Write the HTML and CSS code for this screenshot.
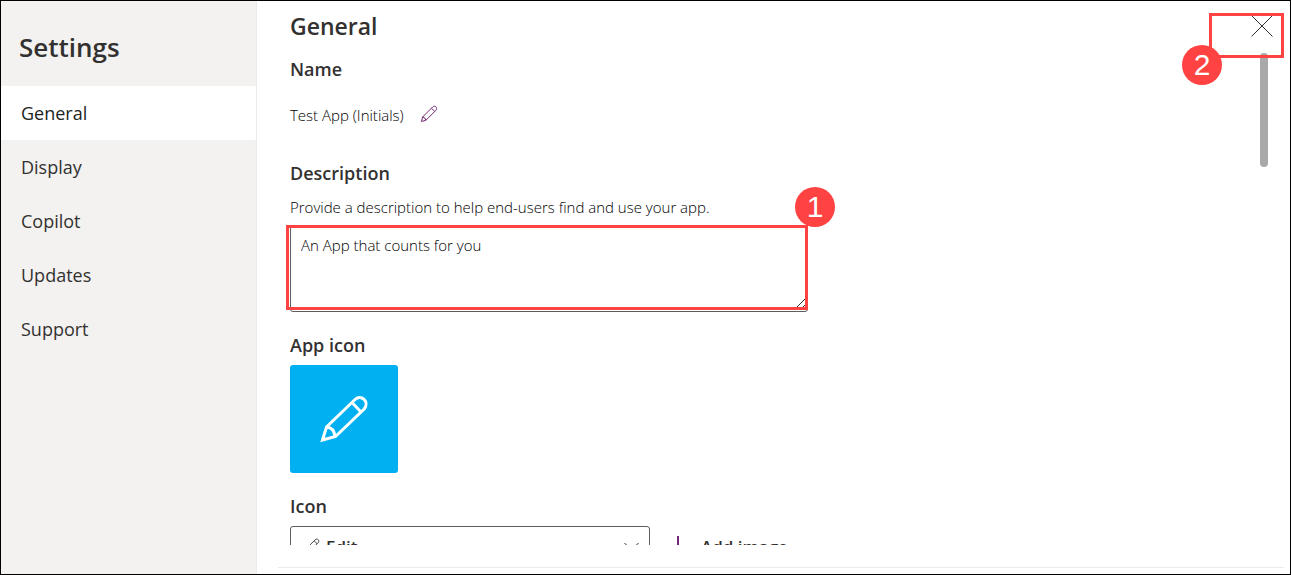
FILE: index.html
```
<!DOCTYPE html>
<html lang="en">
<head>
<meta charset="utf-8">
<title>Settings</title>
<link rel="stylesheet" href="styles.css">
</head>
<body>
<div class="dialog">
  <aside class="sidebar">
    <h1 class="sidebar-title">Settings</h1>
    <nav class="nav">
      <a class="nav-item nav-item-active" href="#general">General</a>
      <a class="nav-item" href="#display">Display</a>
      <a class="nav-item" href="#copilot">Copilot</a>
      <a class="nav-item" href="#updates">Updates</a>
      <a class="nav-item" href="#support">Support</a>
    </nav>
  </aside>
  <main class="main">
    <div class="content">
      <h2 class="page-title">General</h2>
      <h3 class="section-title">Name</h3>
      <div class="name-row">
        <span>Test App (Initials)</span>
        <button class="icon-button" type="button" aria-label="Edit name">
          <svg class="edit-icon" viewBox="0 0 18 18"><path d="M1.5 16.5 2.6 12 12.6 2C15 -.2 18 2.8 15.9 5.3L5.9 15.3ZM2.6 12Q5.4 12.3 5.9 15.3M11.4 3.2 14.7 6.5"/></svg>
        </button>
      </div>
      <h3 class="section-title"><label for="description">Description</label></h3>
      <p class="hint">Provide a description to help end-users find and use your app.</p>
      <div class="description-field">
        <textarea class="description" id="description">An App that counts for you</textarea>
        <svg class="resizer" viewBox="0 0 10 10"><path d="M0 10 10 0M6 10 10 6"/></svg>
        <div class="highlight highlight-description"></div>
        <span class="marker marker-one">1</span>
      </div>
      <h3 class="section-title">App icon</h3>
      <div class="app-tile">
        <svg class="tile-icon" viewBox="0 0 48 48"><path d="M2.5 45 6.5 32 35 4.500C41-1 50 6.500 44.2 14L15.5 41.500ZM6.5 32Q14 32.500 15 41.500M32 7.500 41 17"/></svg>
      </div>
      <h3 class="section-title"><label for="icon">Icon</label></h3>
      <div class="icon-row">
        <div class="select-field">
          <select class="select" id="icon"><option>Edit</option></select>
          <svg class="select-icon" viewBox="0 0 18 18"><path d="M1.5 16.5 2.6 12 12.6 2C15 -.2 18 2.8 15.9 5.3L5.9 15.3ZM2.6 12Q5.4 12.3 5.9 15.3M11.4 3.2 14.7 6.5"/></svg>
          <svg class="chevron" viewBox="0 0 16 10"><path d="M1 1 8 8 15 1"/></svg>
        </div>
        <button class="add-button" type="button">
          <svg class="plus" viewBox="0 0 20 20"><path d="M10 0V20M0 10H20"/></svg>
          Add image
        </button>
      </div>
    </div>
    <footer class="footer"></footer>
    <div class="scroll-thumb"></div>
    <button class="close" type="button" aria-label="Close">
      <svg class="close-icon" viewBox="0 0 22 22"><path d="M.5.5 21.5 21.5M21.5.5.5 21.5"/></svg>
    </button>
    <div class="highlight highlight-close"></div>
    <span class="marker marker-two">2</span>
  </main>
</div>
</body>
</html>
```
FILE: styles.css
```
* { box-sizing: border-box; }
body {
  margin: 0;
  font-family: "Open Sans", "Noto Sans", sans-serif;
  color: #323130;
}
h1, h2, h3, p { margin: 0; font-weight: 600; }
svg { fill: none; stroke: currentColor; }
button {
  border: 0;
  padding: 0;
  background: none;
  font: inherit;
  color: inherit;
}
.dialog {
  display: flex;
  height: 100vh;
  border: 1px solid #000;
  background: #fff;
  overflow: hidden;
}
.sidebar {
  flex: none;
  width: 256px;
  background: #f3f2f1;
  border-right: 1px solid #edebe9;
}
.sidebar-title {
  height: 85px;
  padding: 28px 18px 0;
  font-size: 26px;
  line-height: 36px;
}
.nav { display: flex; flex-direction: column; }
.nav-item {
  height: 54px;
  padding-left: 20px;
  font-size: 18px;
  line-height: 54px;
  color: inherit;
  text-decoration: none;
}
.nav-item-active {
  background: #fff;
  border-radius: 0 2px 2px 0;
  color: #201f1e;
}
.main {
  position: relative;
  flex: 1;
  display: flex;
  flex-direction: column;
  min-width: 0;
}
.content {
  flex: 1;
  min-height: 0;
  padding: 8px 33px 0;
  overflow: hidden;
}
.page-title { font-size: 23px; line-height: 34px; }
.section-title { font-size: 18px; line-height: 24px; }
.page-title + .section-title { margin-top: 14px; }
.name-row {
  display: flex;
  align-items: center;
  gap: 16px;
  height: 44px;
  margin: 12px 0 24px;
  font-size: 15px;
  font-weight: 300;
  color: #000;
}
.icon-button { display: flex; padding-bottom: 2px; color: #742774; }
.edit-icon { width: 18px; height: 18px; }
.hint {
  margin: 12px 0 9px;
  font-size: 15px;
  line-height: 20px;
  font-weight: 300;
  color: #000;
}
.description-field {
  position: relative;
  max-width: 518px;
  margin-bottom: 21px;
}
.description {
  display: block;
  width: 100%;
  height: 86px;
  padding: 8px 10px;
  border: 1px solid #605e5c;
  border-radius: 3px;
  font: 300 15px/20px "Open Sans", "Noto Sans", sans-serif;
  color: #000;
  outline: 0;
}
.description::-webkit-resizer { display: none; }
.resizer {
  position: absolute;
  right: 2px;
  bottom: 4px;
  width: 10px;
  height: 10px;
  pointer-events: none;
}
.highlight {
  position: absolute;
  border: 3px solid #ff4343;
  pointer-events: none;
}
.highlight-description { inset: -1px 0 2px -4px; }
.marker {
  position: absolute;
  width: 40px;
  height: 40px;
  border-radius: 50%;
  background: #ff4343;
  color: #fff;
  font: 30px/40px "Liberation Sans", Arial, sans-serif;
  text-align: center;
}
.marker-one { top: -39px; right: -27px; }
.app-tile {
  display: grid;
  place-items: center;
  width: 108px;
  height: 108px;
  margin: 8px 0 21px;
  border-radius: 3px;
  background: #00b0f0;
  color: #fff;
}
.tile-icon { width: 48px; height: 48px; stroke-width: 3; }
.icon-row { display: flex; gap: 18px; margin-top: 8px; }
.select-field { position: relative; flex: 0 1 360px; }
.select {
  appearance: none;
  width: 100%;
  height: 40px;
  padding: 0 35px;
  border: 1px solid #605e5c;
  border-radius: 3px;
  background: #fff;
  font: 600 17px "Open Sans", "Noto Sans", sans-serif;
  color: inherit;
}
.select-icon { position: absolute; left: 14px; top: 12px; width: 16px; height: 16px; }
.chevron { position: absolute; right: 10px; top: 16px; width: 17px; height: 10px; }
.add-button {
  display: flex;
  align-items: center;
  gap: 13px;
  height: 40px;
  font-size: 17px;
  font-weight: 600;
}
.plus { width: 20px; height: 20px; color: #742774; stroke-width: 2; }
.footer {
  flex: none;
  height: 7px;
  margin: 22px 6px 0 21px;
  border-top: 1px solid #edebe9;
}
.scroll-thumb {
  position: absolute;
  top: 52px;
  right: 22px;
  width: 8px;
  height: 114px;
  border-radius: 4px;
  background: #a9a9a9;
}
.close { position: absolute; top: 14px; right: 17px; display: flex; }
.close-icon { width: 22px; height: 22px; }
.highlight-close { top: 12px; right: 6px; width: 75px; height: 45px; }
.marker-two { top: 44px; right: 68px; }
```
